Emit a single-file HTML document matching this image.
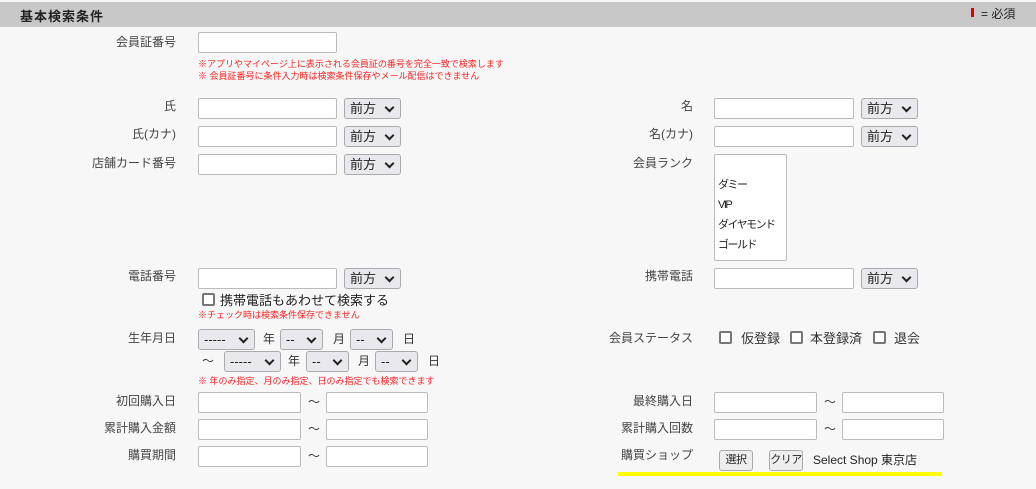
<!DOCTYPE html>
<html><head><meta charset="utf-8"><style>
*{box-sizing:border-box;margin:0;padding:0}
body{width:1036px;height:489px;background:#f7f7f7;font-family:"Liberation Sans","Noto Sans CJK JP",sans-serif;color:#333;position:relative;overflow:hidden;font-size:12px}
.a{position:absolute;white-space:nowrap}
.hd{position:absolute;left:0;top:2px;width:1036px;height:25px;background:#c8c8c8}
.lb{position:absolute;text-align:right;width:140px;font-size:12px;color:#444;white-space:nowrap}
.in{position:absolute;height:21px;background:#fff;border:1px solid #bbb;border-radius:2px}
.sel{position:absolute;height:21px;background:#e9e9ed;border:1px solid #aaa;border-radius:3px;font-size:13px;padding-left:5px;line-height:19px;color:#222;white-space:nowrap}
.sel:after{content:"";position:absolute;right:7px;top:5px;width:5px;height:5px;border-right:2px solid #222;border-bottom:2px solid #222;transform:rotate(45deg)}
.red{position:absolute;color:#f22;font-size:9px;white-space:nowrap}
.cb{position:absolute;width:13px;height:13px;border:2px solid #777;border-radius:2px;background:#fff}
.btn{position:absolute;height:21px;background:#eee;border:1px solid #aaa;border-radius:3px;font-size:11px;text-align:center;line-height:19px;color:#222;white-space:nowrap;letter-spacing:-0.5px}
</style></head><body>
<div class="hd"></div>
<div class="a" style="left:20px;top:6px;font-size:13px;font-weight:bold;letter-spacing:1px;color:#222">基本検索条件</div>
<div class="a" style="left:971px;top:8px;width:3px;height:9px;background:#d00"></div>
<div class="a" style="left:981px;top:5px;font-size:12px;color:#222">= 必須</div>

<div class="lb" style="left:36px;top:33px">会員証番号</div>
<div class="in" style="left:198px;top:32px;width:139px"></div>
<div class="red" style="left:198px;top:57px">※アプリやマイページ上に表示される会員証の番号を完全一致で検索します</div>
<div class="red" style="left:198px;top:69px">※ 会員証番号に条件入力時は検索条件保存やメール配信はできません</div>

<div class="lb" style="left:36px;top:97px">氏</div>
<div class="in" style="left:198px;top:98px;width:139px"></div>
<div class="sel" style="left:344px;top:98px;width:57px">前方</div>
<div class="lb" style="left:36px;top:125px">氏(カナ)</div>
<div class="in" style="left:198px;top:126px;width:139px"></div>
<div class="sel" style="left:344px;top:126px;width:57px">前方</div>
<div class="lb" style="left:36px;top:154px">店舗カード番号</div>
<div class="in" style="left:198px;top:154px;width:139px"></div>
<div class="sel" style="left:344px;top:154px;width:57px">前方</div>

<div class="lb" style="left:553px;top:97px">名</div>
<div class="in" style="left:714px;top:98px;width:140px"></div>
<div class="sel" style="left:861px;top:98px;width:57px">前方</div>
<div class="lb" style="left:553px;top:125px">名(カナ)</div>
<div class="in" style="left:714px;top:126px;width:140px"></div>
<div class="sel" style="left:861px;top:126px;width:57px">前方</div>
<div class="lb" style="left:553px;top:154px">会員ランク</div>
<div class="in" style="left:714px;top:154px;width:73px;height:107px;font-size:11px;line-height:20px;padding:20px 0 0 3px;color:#222;white-space:nowrap;letter-spacing:-1.5px;overflow:hidden">ダミー<br>VIP<br>ダイヤモンド<br>ゴールド</div>

<div class="lb" style="left:36px;top:267px">電話番号</div>
<div class="in" style="left:198px;top:268px;width:139px"></div>
<div class="sel" style="left:344px;top:268px;width:57px">前方</div>
<div class="cb" style="left:202px;top:293px"></div>
<div class="a" style="left:220px;top:290px;font-size:13px;color:#222">携帯電話もあわせて検索する</div>
<div class="red" style="left:198px;top:308px">※チェック時は検索条件保存できません</div>

<div class="lb" style="left:553px;top:267px">携帯電話</div>
<div class="in" style="left:714px;top:268px;width:140px"></div>
<div class="sel" style="left:861px;top:268px;width:57px">前方</div>

<div class="lb" style="left:36px;top:329px">生年月日</div>
<div class="sel" style="left:198px;top:329px;width:57px">-----</div>
<div class="a" style="left:263px;top:330px">年</div>
<div class="sel" style="left:280px;top:329px;width:43px">--</div>
<div class="a" style="left:333px;top:330px">月</div>
<div class="sel" style="left:350px;top:329px;width:43px">--</div>
<div class="a" style="left:403px;top:330px">日</div>
<div class="a" style="left:202px;top:352px">〜</div>
<div class="sel" style="left:224px;top:351px;width:57px">-----</div>
<div class="a" style="left:288px;top:352px">年</div>
<div class="sel" style="left:306px;top:351px;width:43px">--</div>
<div class="a" style="left:358px;top:352px">月</div>
<div class="sel" style="left:375px;top:351px;width:43px">--</div>
<div class="a" style="left:428px;top:352px">日</div>
<div class="red" style="left:198px;top:374px">※ 年のみ指定、月のみ指定、日のみ指定でも検索できます</div>

<div class="lb" style="left:553px;top:329px">会員ステータス</div>
<div class="cb" style="left:719px;top:331px"></div><div class="a" style="left:741px;top:328px;font-size:13px">仮登録</div>
<div class="cb" style="left:790px;top:331px"></div><div class="a" style="left:810px;top:328px;font-size:13px">本登録済</div>
<div class="cb" style="left:873px;top:331px"></div><div class="a" style="left:894px;top:328px;font-size:13px">退会</div>

<div class="lb" style="left:36px;top:392px">初回購入日</div>
<div class="in" style="left:198px;top:392px;width:103px"></div><div class="a" style="left:308px;top:393px">〜</div><div class="in" style="left:326px;top:392px;width:102px"></div>
<div class="lb" style="left:36px;top:419px">累計購入金額</div>
<div class="in" style="left:198px;top:419px;width:103px"></div><div class="a" style="left:308px;top:420px">〜</div><div class="in" style="left:326px;top:419px;width:102px"></div>
<div class="lb" style="left:36px;top:446px">購買期間</div>
<div class="in" style="left:198px;top:446px;width:103px"></div><div class="a" style="left:308px;top:447px">〜</div><div class="in" style="left:326px;top:446px;width:102px"></div>

<div class="lb" style="left:553px;top:392px">最終購入日</div>
<div class="in" style="left:714px;top:392px;width:103px"></div><div class="a" style="left:824px;top:393px">〜</div><div class="in" style="left:842px;top:392px;width:102px"></div>
<div class="lb" style="left:553px;top:419px">累計購入回数</div>
<div class="in" style="left:714px;top:419px;width:103px"></div><div class="a" style="left:824px;top:420px">〜</div><div class="in" style="left:842px;top:419px;width:102px"></div>
<div class="lb" style="left:553px;top:446px">購買ショップ</div>
<div class="btn" style="left:719px;top:450px;width:34px">選択</div>
<div class="btn" style="left:769px;top:450px;width:34px">クリア</div>
<div class="a" style="left:813px;top:451px;font-size:12px;color:#222">Select Shop 東京店</div>
<div class="a" style="left:618px;top:472px;width:324px;height:4px;background:#ff0"></div>
</body></html>
